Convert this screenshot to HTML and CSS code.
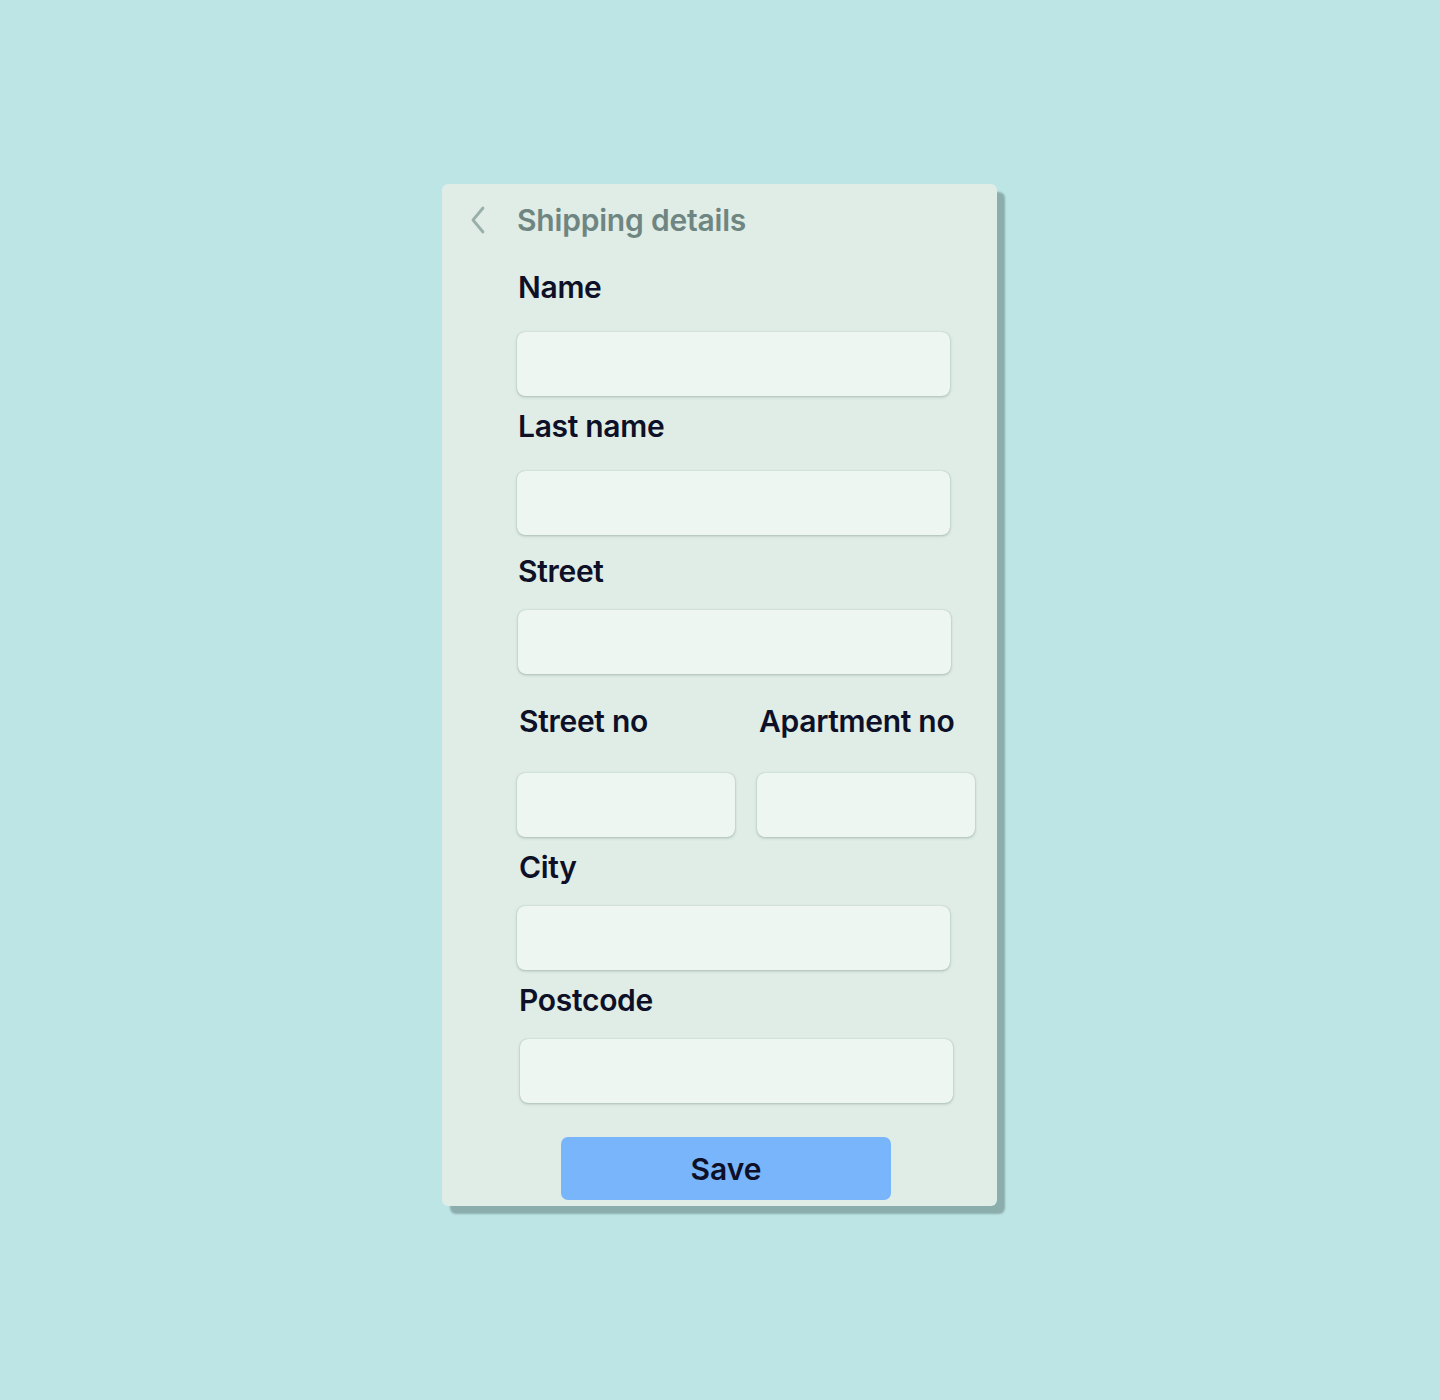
FILE: index.html
```html
<!DOCTYPE html>
<html lang="en">
<head>
    <meta charset="UTF-8">
    <meta name="viewport" content="width=device-width, initial-scale=1.0">
    <title>Shipping details</title>
    <link rel="stylesheet" href="styles.css">
</head>
<body>
    <div class="page">
        <form class="card" action="#" method="POST">
            <div class="cardHeader">
                <a href="#" class="back">
                    <svg width="18" height="30" viewBox="0 0 18 30">
                        <path d="M14 3 L4 15 L14 27" fill="none" stroke="#9aaeaa" stroke-width="2.8" stroke-linecap="round" stroke-linejoin="round"/>
                    </svg>
                </a>
                <h1>Shipping details</h1>
            </div>

            <div class="field first">
                <label for="name">Name</label>
                <input type="text" id="name" name="name">
            </div>
            <div class="field">
                <label for="lastname">Last name</label>
                <input type="text" id="lastname" name="lastname">
            </div>
            <div class="field street">
                <label for="street">Street</label>
                <input type="text" id="street" name="street">
            </div>
            <div class="fieldRow">
                <div class="field">
                    <label for="streetno">Street no</label>
                    <input type="text" id="streetno" name="streetno">
                </div>
                <div class="field">
                    <label for="aptno">Apartment no</label>
                    <input type="text" id="aptno" name="aptno">
                </div>
            </div>
            <div class="field tight">
                <label for="city">City</label>
                <input type="text" id="city" name="city">
            </div>
            <div class="field tight postcode">
                <label for="postcode">Postcode</label>
                <input type="text" id="postcode" name="postcode">
            </div>

            <button type="submit" class="btn">Save</button>
        </form>
    </div>
</body>
</html>
```

FILE: styles.css
```css
body {
    font-family: Inter, "Noto Sans", Arial, sans-serif;
    margin: 0;
    padding: 0;
    background-color: #bde5e6;
}
.page {
    display: flex;
    justify-content: center;
    padding: 184px 0 0 0;
    min-height: 1216px;
}
.card {
    width: 555px;
    height: 1022px;
    box-sizing: border-box;
    margin-left: -1px;
    padding: 0 0 0 75px;
    background-color: #dfede6;
    border-radius: 6px;
    box-shadow: 8px 8px 2px #8badac;
    display: flex;
    flex-direction: column;
}
.cardHeader {
    display: flex;
    align-items: center;
    height: 40px;
    margin-top: 16px;
    margin-left: -48px;
}
.back {
    display: flex;
    width: 48px;
}
.cardHeader h1 {
    margin: 0;
    font-size: 30px;
    font-weight: 600;
    color: #6f8581;
    letter-spacing: -0.2px;
}
.field {
    display: flex;
    flex-direction: column;
    margin-top: 10px;
}
.field.first {
    margin-top: 27px;
}
.field.street {
    margin-top: 16px;
}
.field label {
    display: block;
    height: 40px;
    line-height: 40px;
    margin-bottom: 25px;
    padding-left: 1px;
    font-size: 30px;
    font-weight: 600;
    color: #0d1027;
    letter-spacing: -0.3px;
}
.field.street label,
.field.tight label {
    margin-bottom: 19px;
}
input {
    width: 433px;
    height: 64px;
    box-sizing: border-box;
    margin: 0;
    border: none;
    border-radius: 8px;
    background-color: #eef6f2;
    box-shadow: 0 1px 3px rgba(50, 80, 70, 0.3), 0 0 1px rgba(50, 80, 70, 0.3);
    font-family: inherit;
    font-size: 20px;
    padding: 0 16px;
}
.field.street input {
    margin-left: 1px;
}
.fieldRow {
    display: grid;
    grid-template-columns: 218px 218px;
    column-gap: 22px;
    margin-top: 27px;
}
.fieldRow .field {
    margin-top: 0;
}
.fieldRow .field label {
    margin-bottom: 32px;
    padding-left: 2px;
}
.fieldRow input {
    width: 218px;
}
.field.tight label {
    padding-left: 2px;
}
.field.postcode input {
    margin-left: 3px;
}
.btn {
    width: 330px;
    height: 63px;
    margin: 34px 0 0 44px;
    border: none;
    border-radius: 7px;
    background-color: #78b5fa;
    color: #0d1027;
    font-family: inherit;
    font-size: 30px;
    font-weight: 600;
    cursor: pointer;
}
```
